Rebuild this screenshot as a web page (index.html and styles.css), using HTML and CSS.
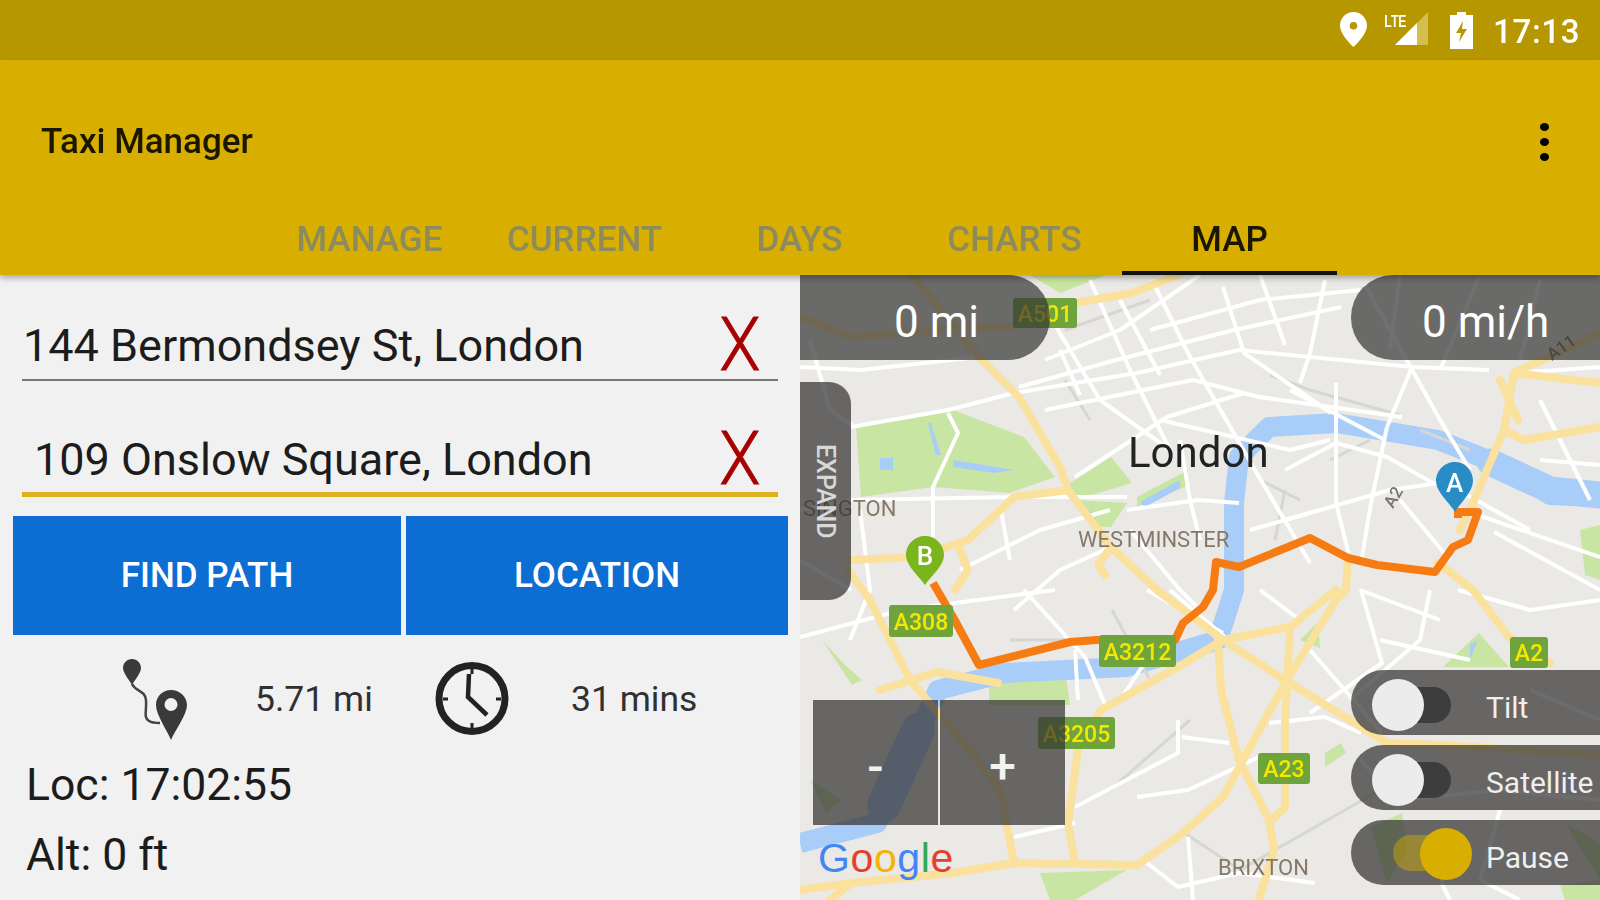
FILE: index.html
```html
<!DOCTYPE html>
<html lang="en">
<head>
<meta charset="utf-8">
<title>Taxi Manager</title>
<link rel="stylesheet" href="styles.css">
</head>
<body>
<div class="screen">
  <header class="status">
    <svg class="st-pin" viewBox="0 0 27 35"><path class="fw" fill-rule="evenodd" d="M13.5 0C6 0 0 6 0 13.5 0 23 13.5 35 13.5 35S27 23 27 13.5C27 6 21 0 13.5 0Zm0 10a3.8 3.8 0 1 1 0 7.600a3.800 3.800 0 0 1 0-7.600Z"/></svg>
    <span class="st-lte">LTE</span>
    <svg class="st-signal" viewBox="0 0 33 33"><path class="fdim" d="M33 0V33H0Z"/><path class="fw" d="M22 11V33H0Z"/></svg>
    <svg class="st-batt" viewBox="0 0 23 37"><path class="fw" fill-rule="evenodd" d="M7 0H16V3H23V37H0V3H7ZM13 9 6 21H11L9 30 17 17H12Z"/></svg>
    <span class="st-time">17:13</span>
  </header>
  <div class="appbar">
    <div class="titlerow">
      <span class="title">Taxi Manager</span>
      <span class="more"><i></i><i></i><i></i></span>
    </div>
    <nav class="tabs">
      <a class="tab">MANAGE</a><a class="tab">CURRENT</a><a class="tab">DAYS</a><a class="tab">CHARTS</a><a class="tab active">MAP</a>
    </nav>
  </div>
  <main class="content">
    <section class="panel">
      <div class="field">
        <span class="addr">144 Bermondsey St, London</span>
        <span class="clear">X</span>
      </div>
      <div class="field focus">
        <span class="addr">109 Onslow Square, London</span>
        <span class="clear">X</span>
      </div>
      <div class="buttons">
        <button class="btn first">FIND PATH</button>
        <button class="btn second">LOCATION</button>
      </div>
      <div class="stats">
        <svg class="ic-route" viewBox="122 657 65 81">
          <path class="rt-line" d="M132 682C136 690 145 688 146 698 147 708 143 716 149 719 152 721 156 721 160 721"/>
          <path class="rt-fill" d="M132 657C127 657 123 661 123 666 123 671 130 679 132 683 134 679 141 671 141 666 141 661 137 657 132 657Z"/>
          <path class="rt-fill" fill-rule="evenodd" d="M171 688C162 688 156 695 156 703 156 713 167 728 171 738 175 728 187 713 187 703 187 695 180 688 171 688ZM171 696A6.500 6.500 0 1 1 171 709 6.500 6.500 0 0 1 171 696Z"/>
        </svg>
        <span class="stat dist">5.71 mi</span>
        <svg class="ic-clock" viewBox="435 659 74 75">
          <circle class="ck-ring" cx="472" cy="696.500" r="33"/>
          <path class="ck-hand" d="M469 672 468 695 487 713"/>
          <path class="ck-tick" d="M472 667V672M472 721V726M443 697H448M496 697H501"/>
        </svg>
        <span class="stat time">31 mins</span>
      </div>
      <p class="line">Loc: 17:02:55</p>
      <p class="line">Alt: 0 ft</p>
    </section>
    <section class="map">
      <svg class="mapart" viewBox="800 275 800 625">
        <rect class="land" x="800" y="275" width="800" height="625"/>
        <g class="park">
          <path d="M856 427 953 410 1024 437 1055 477 1009 493 933 487 861 497Z"/>
          <path d="M1111 457 1132 483 1075 500 1070 483Z"/>
          <path d="M1137 497 1188 470 1185 487 1137 507Z"/>
          <path d="M1075 500 1127 503 1111 527 1091 527Z"/>
          <path d="M1030 275 1106 275 1060 293Z"/>
          <path d="M989 683 1065 668 1070 705 989 705Z"/>
          <path d="M810 780 841 800 826 813Z"/>
          <path d="M822 640 845 665 862 680 852 685Z"/>
          <path d="M1443 667 1479 633 1509 667Z"/>
          <path d="M1325 753 1341 743 1346 753 1325 767Z"/>
          <path d="M1040 873 1127 870 1075 900 1050 900Z"/>
          <path d="M1371 827 1402 813 1407 850 1387 883Z"/>
          <path d="M1565 823 1600 843 1600 880Z"/>
          <path d="M1560 885 1600 880 1600 900 1565 900Z"/>
          <path d="M1580 530 1600 525 1600 580 1585 575Z"/>
          <path d="M1300 640 1318 622 1320 648Z"/>
        </g>
        <g class="water">
          <path d="M1600 497 1550 495 1514 470 1438 440 1336 423 1269 427 1239 457 1234 503 1234 590 1218 640 1127 667 1004 673 938 690 877 823 800 843"/>
          <path class="wide" d="M918 730 884 805"/>
          <path class="wide2" d="M1490 462 1550 490 1600 495"/>
        </g>
        <g class="pond">
          <path d="M953 460 1014 470 994 473 953 467Z"/>
          <path d="M928 423 936 455 941 455 931 423Z"/>
          <path d="M880 458H893V470H880Z"/>
          <path d="M1140 502 1180 480 1180 488 1145 507Z"/>
          <path d="M1090 510 1097 522 1088 522Z"/>
          <path d="M1470 645 1478 640 1470 660Z"/>
        </g>
        <g class="rail">
          <path d="M1260 480 1300 500M1065 330 1150 300M1285 490 1275 540M1420 430 1470 450M1112 610 1150 680M1010 640 1180 640M1190 720 1110 790M1370 440 1330 460M1380 790 1240 870 1180 830M1065 380 1090 420M1270 375 1310 390 1400 415"/>
        </g>
        <g class="road">
          <path d="M851 427 948 410 1014 393 1137 373 1239 350 1310 357 1412 367 1489 370"/>
          <path d="M800 367 861 370 979 357"/>
          <path d="M1019 387 1116 360 1234 330 1341 307"/>
          <path d="M1045 410 1193 380 1259 397 1402 417"/>
          <path d="M1152 280 1188 353 1213 397 1259 477 1310 563"/>
          <path d="M1223 287 1244 353 1331 413"/>
          <path d="M1325 280 1310 353 1300 383"/>
          <path d="M1336 383 1336 503 1351 563"/>
          <path d="M1075 477 1167 417 1244 393"/>
          <path d="M948 413 958 433 933 487 933 537"/>
          <path d="M800 510 851 500 1014 497 1127 497"/>
          <path d="M1127 510 1198 500 1239 503"/>
          <path d="M1285 470 1336 443 1387 457 1433 483"/>
          <path d="M1387 427 1371 503 1361 563"/>
          <path d="M1463 510 1600 557"/>
          <path d="M1494 532 1600 590"/>
          <path d="M1412 367 1387 427"/>
          <path d="M1514 373 1600 367"/>
          <path d="M1040 300 1100 400 1170 450"/>
          <path d="M1200 275 1120 330 1045 360"/>
          <path d="M1400 275 1390 350"/>
          <path d="M1480 275 1440 370"/>
          <path d="M1014 610 1060 570 1111 547"/>
          <path d="M800 637 902 610 1055 590"/>
          <path d="M1024 590 1085 657 1106 707"/>
          <path d="M1075 650 1078 700"/>
          <path d="M1147 590 1223 633"/>
          <path d="M1310 650 1382 733"/>
          <path d="M1361 590 1382 663 1310 713"/>
          <path d="M1269 723 1325 717 1361 733"/>
          <path d="M1182 737 1229 743"/>
          <path d="M1137 797 1188 790 1259 757"/>
          <path d="M1147 863 1178 887 1239 873 1315 883"/>
          <path d="M1188 837 1193 900"/>
          <path d="M1014 837 1075 823"/>
          <path d="M1075 807 1178 753 1178 720"/>
          <path d="M1458 590 1530 610 1600 600"/>
          <path d="M1430 590 1420 640 1350 700"/>
          <path d="M1530 690 1600 720"/>
          <path d="M1360 760 1400 800 1500 790 1600 800"/>
          <path d="M1440 880 1450 900"/>
          <path d="M1500 810 1480 880 1520 900"/>
          <path d="M800 560 851 590"/>
          <path d="M1540 280 1520 360"/>
          <path d="M1540 460 1600 465"/>
          <path d="M1090 280 1130 370 1170 450"/>
          <path d="M1120 300 1160 375"/>
          <path d="M1060 350 1080 395"/>
          <path d="M1260 275 1285 345"/>
          <path d="M1365 285 1440 420 1470 470"/>
          <path d="M1290 390 1385 440"/>
          <path d="M1150 330 1260 300 1360 290"/>
          <path d="M1160 420 1290 450 1330 440"/>
          <path d="M1180 440 1190 500 1200 540"/>
          <path d="M1285 520 1390 490 1460 480"/>
          <path d="M1400 500 1450 560"/>
          <path d="M1250 530 1320 510"/>
          <path d="M1130 530 1180 590 1200 610"/>
          <path d="M960 570 1040 530 1110 510"/>
          <path d="M860 510 870 590 850 640"/>
          <path d="M1000 505 1010 560"/>
          <path d="M1360 590 1440 620"/>
          <path d="M1260 590 1300 620"/>
          <path d="M1240 650 1170 590"/>
          <path d="M810 340 830 410 852 425"/>
          <path d="M1380 640 1470 660"/>
          <path d="M1120 700 1160 640"/>
          <path d="M1540 400 1590 500"/>
          <path d="M1440 480 1530 530"/>
        </g>
        <g class="major">
          <path d="M912 275 979 357 1019 397 1060 467 1068 490 1111 547 1157 590 1223 640 1280 677 1387 743 1440 745 1600 755"/>
          <path d="M1075 303 1132 293 1178 275"/>
          <path d="M800 317 851 337 902 333 979 327 1014 327"/>
          <path d="M851 560 917 557 968 540 1014 497 1068 490"/>
          <path d="M958 545 968 570 955 590"/>
          <path d="M800 890 851 883 953 873 1014 863 1137 865 1183 833 1223 797 1285 683 1336 600 1346 590 1348 557"/>
          <path d="M1014 863 1000 790 970 750 910 680 870 600 848 570"/>
          <path d="M1075 863 1068 823 1078 750 1101 710 1178 667 1223 640 1290 627 1336 590"/>
          <path d="M1218 640 1221 690 1239 760 1269 820 1274 850 1259 900"/>
          <path d="M1290 627 1285 723 1285 807 1269 823"/>
          <path d="M1438 563 1473 590 1509 637 1550 663"/>
          <path d="M1473 503 1504 430 1514 373 1600 333"/>
          <path d="M1514 373 1600 383"/>
          <path d="M1504 430 1524 440 1600 427"/>
          <path d="M1500 380 1518 420"/>
          <path d="M1473 503 1460 530"/>
          <path d="M1111 547 1098 565 1105 575"/>
          <path d="M880 690 937 672 998 683"/>
          <path d="M830 900 851 883"/>
        </g>
        <path class="route" d="M933 583 953 617 979 665 1070 642 1096 640 1175 640 1183 623 1203 607 1213 590 1216 562 1239 567 1310 538 1348 558 1377 565 1435 572 1453 547 1468 540 1478 512 1458 512 1458 518"/>
        <g class="shield">
          <rect x="1013" y="298" width="64" height="30" rx="3"/>
          <rect x="889" y="605" width="64" height="32" rx="3"/>
          <rect x="1099" y="635" width="77" height="32" rx="3"/>
          <rect x="1510" y="637" width="38" height="31" rx="3"/>
          <rect x="1038" y="717" width="77" height="32" rx="3"/>
          <rect x="1258" y="753" width="52" height="31" rx="3"/>
        </g>
        <g class="shield-text">
          <text x="1045" y="322">A501</text>
          <text x="921" y="630">A308</text>
          <text x="1137.500" y="660">A3212</text>
          <text x="1529" y="661">A2</text>
          <text x="1076.500" y="742">A3205</text>
          <text x="1284" y="777">A23</text>
        </g>
        <text class="lbl-city" x="1128" y="467">London</text>
        <text class="lbl-area" x="1078" y="547">WESTMINSTER</text>
        <text class="lbl-area" x="1218" y="875">BRIXTON</text>
        <text class="lbl-area" x="803" y="516">SINGTON</text>
        <text class="lbl-road" transform="translate(1393 509) rotate(-60)">A2</text>
        <text class="lbl-road" transform="translate(1552 361) rotate(-35)">A11</text>
        <path class="pin-a" d="M1455 462C1445 462 1436 470 1436 481 1436 492 1450 503 1455 512 1460 503 1473 492 1473 481 1473 470 1465 462 1455 462Z"/>
        <text class="pin-t" x="1454.500" y="492">A</text>
        <path class="pin-b" d="M925 536C915 536 906 544 906 555 906 566 920 577 925 585 930 577 944 566 944 555 944 544 935 536 925 536Z"/>
        <text class="pin-t" x="925" y="565">B</text>
      </svg>
      <div class="pill pill-left">0 mi</div>
      <div class="pill pill-right">0 mi/h</div>
      <button class="expand"><span>EXPAND</span></button>
      <div class="zoomer">
        <span class="zbtn minus">-</span>
        <span class="zbtn plus">+</span>
      </div>
      <div class="google"><b class="gb">G</b><b class="gr">o</b><b class="gy">o</b><b class="gb">g</b><b class="gg">l</b><b class="gr">e</b></div>
      <div class="toggles">
        <div class="toggle"><span class="switch"><i class="track"></i><i class="thumb"></i></span><span class="tlabel">Tilt</span></div>
        <div class="toggle"><span class="switch"><i class="track"></i><i class="thumb"></i></span><span class="tlabel">Satellite</span></div>
        <div class="toggle on"><span class="switch"><i class="track"></i><i class="thumb"></i></span><span class="tlabel">Pause</span></div>
      </div>
    </section>
  </main>
</div>
</body>
</html>
```
FILE: styles.css
```css
* { box-sizing: border-box; }
html, body { margin: 0; padding: 0; }
body { width: 1600px; height: 900px; overflow: hidden; font-family: Roboto, "Liberation Sans", sans-serif; background: #f1f1f1; }
.screen { width: 1600px; height: 900px; display: flex; flex-direction: column; filter: blur(.55px); }

.status { height: 60px; flex: none; background: #b79700; display: flex; align-items: center; color: #fff; position: relative; }
.st-pin { width: 27px; height: 35px; margin: -2px 0 0 1340px; flex: none; }
.st-lte { font: bold 17px "Liberation Sans", sans-serif; position: absolute; left: 1380px; top: 12px; transform: scaleX(.72); }
.st-signal { width: 33px; height: 33px; margin: -3px 0 0 28px; flex: none; }
.st-batt { width: 23px; height: 37px; margin: 1px 0 0 22px; flex: none; }
.st-time { font-size: 33px; font-weight: 500; margin-left: 20px; letter-spacing: .7px; padding-top: 3px; }
.fw { fill: #fff; }
.fdim { fill: #d6bd50; }

.appbar { height: 215px; flex: none; background: #d8ae00; display: flex; flex-direction: column; position: relative; z-index: 2; box-shadow: 0 3px 6px rgba(0,0,0,.3); }
.titlerow { flex: 1; display: flex; align-items: center; justify-content: space-between; padding: 4px 51px 0 41px; }
.title { font-size: 35px; font-weight: 500; color: #1a1600; }
.more { display: flex; flex-direction: column; gap: 7px; }
.more i { width: 9px; height: 8px; border-radius: 50%; background: #000; display: block; }
.tabs { height: 56px; display: flex; padding-left: 262px; }
.tab { width: 215px; display: flex; align-items: center; justify-content: center; font-size: 35px; font-weight: 500; color: #8b8b5e; padding-bottom: 16px; }
.tab.active { color: #1a1600; border-bottom: 4px solid #111; padding-bottom: 12px; }

.content { flex: 1; display: flex; min-height: 0; }
.panel { width: 800px; flex: none; background: #f1f1f1; padding-top: 24px; }
.field { height: 82px; margin: 0 22px; display: flex; align-items: center; justify-content: space-between; border-bottom: 2px solid #777; padding: 13px 0 0 1px; color: #1c1c1c; }
.field.focus { margin-top: 33px; border-bottom: 5px solid #dcb220; padding-left: 12px; height: 83px; }
.addr { font-size: 45px; }
.clear { font-size: 75px; font-weight: 300; color: #a80000; line-height: 1; margin-right: 15px; transform: scaleX(.9); margin-top: -3px; -webkit-text-stroke: .8px #a80000; }
.buttons { display: flex; gap: 5px; margin: 19px 12px 0 13px; }
.btn { flex: 1; height: 119px; border: 0; background: #0c6dd2; color: #fff; font: 500 35px Roboto, sans-serif; padding: 0; }
.btn.first { flex: 0 0 388px; }
.stats { height: 85px; margin-top: 21px; padding-left: 122px; display: flex; align-items: center; }
.ic-route { width: 65px; height: 81px; flex: none; margin-top: 2px; }
.rt-line { fill: none; stroke: #444; stroke-width: 2.5; }
.rt-fill { fill: #3a3a3a; }
.stat { font-size: 35.500px; color: #303030; }
.dist { margin-left: 68px; width: 180px; flex: none; }
.ic-clock { width: 74px; height: 75px; flex: none; }
.ck-ring { fill: none; stroke: #222; stroke-width: 7; }
.ck-hand { fill: none; stroke: #222; stroke-width: 4.500; }
.ck-tick { fill: none; stroke: #222; stroke-width: 3; }
.time { margin-left: 62px; }
.line { margin: 0; padding-left: 26px; font-size: 44.500px; line-height: 69px; color: #1c1c1c; }
.line:first-of-type { margin-top: 10px; }
.line + .line { padding-top: 1px; }

.map { flex: 1; position: relative; overflow: hidden; background: #ebe9e5; }
.mapart { display: block; width: 800px; height: 625px; filter: blur(.6px); }
.land { fill: #ebe9e5; }
.park path { fill: #c9e5a3; }
.water path { fill: none; stroke: #a7cdf8; stroke-width: 20; stroke-linejoin: round; }
.water .wide { stroke-width: 34; stroke-linecap: round; }
.water .wide2 { stroke-width: 27; stroke-linecap: round; }
.pond path { fill: #a7cdf8; }
.rail path { fill: none; stroke: #d6d6d4; stroke-width: 3; }
.road path { fill: none; stroke: #fff; stroke-width: 4; stroke-linejoin: round; }
.major path { fill: none; stroke: #fae19d; stroke-width: 8; stroke-linejoin: round; stroke-linecap: round; }
.route { fill: none; stroke: #f57b12; stroke-width: 8; stroke-linejoin: round; }
.shield rect { fill: #6fa33c; }
.shield-text text { fill: #f5e800; font: 500 23px Roboto, sans-serif; text-anchor: middle; }
.lbl-city { fill: #222; font: 400 42px Roboto, sans-serif; }
.lbl-area { fill: #857868; font: 400 22px Roboto, sans-serif; }
.lbl-road { fill: #77756f; font: 500 17px Roboto, sans-serif; }
.pin-a { fill: #2a8cc4; }
.pin-b { fill: #7ab51d; }
.pin-t { fill: #fff; font: 500 26px Roboto, sans-serif; text-anchor: middle; }

.pill { position: absolute; top: 0; height: 85px; background: rgba(51,51,51,.7); color: #fff; font-size: 44px; display: flex; align-items: center; padding-top: 8px; }
.pill-left { left: 0; width: 250px; border-radius: 0 42px 42px 0; padding-left: 94px; }
.pill-right { right: 0; width: 249px; border-radius: 42px 0 0 42px; padding-left: 71px; }
.expand { position: absolute; left: 0; top: 107px; width: 51px; height: 218px; border: 0; padding: 0; background: rgba(51,51,51,.72); border-radius: 0 22px 22px 0; display: flex; align-items: center; justify-content: center; }
.expand span { writing-mode: vertical-rl; font: 500 25px Roboto, sans-serif; color: #d8d8d8; margin-top: 0; }
.zoomer { position: absolute; left: 13px; top: 425px; width: 252px; height: 125px; display: flex; gap: 2px; }
.zbtn { flex: 1; background: rgba(51,51,51,.72); color: #f2f2f2; font-size: 48px; font-weight: 500; display: flex; align-items: center; justify-content: center; padding-top: 8px; }
.google { position: absolute; left: 18px; top: 560px; font: 400 41px "Liberation Sans", sans-serif; letter-spacing: .6px; }
.google b { font-weight: 400; }
.gb { color: #4285f4; } .gr { color: #e43f30; } .gy { color: #f4b400; } .gg { color: #34a853; }
.toggles { position: absolute; right: 0; top: 395px; width: 249px; display: flex; flex-direction: column; gap: 10px; }
.toggle { height: 65px; background: rgba(51,51,51,.72); border-radius: 33px 0 0 33px; display: flex; align-items: center; color: #efefef; font-size: 30px; padding-left: 21px; }
.switch { width: 79px; height: 52px; position: relative; flex: none; }
.track { position: absolute; left: 26px; top: 10px; width: 53px; height: 36px; border-radius: 18px; background: rgba(40,40,40,.65); }
.thumb { position: absolute; left: 0; top: 2px; width: 52px; height: 52px; border-radius: 50%; background: #ececec; }
.toggle .tlabel { margin: 10px 0 0 35px; }
.on .track { left: 21px; width: 53px; background: rgba(216,174,0,.45); top: 8px; }
.on .thumb { left: 48px; background: #d8ae00; top: 1px; }
```
